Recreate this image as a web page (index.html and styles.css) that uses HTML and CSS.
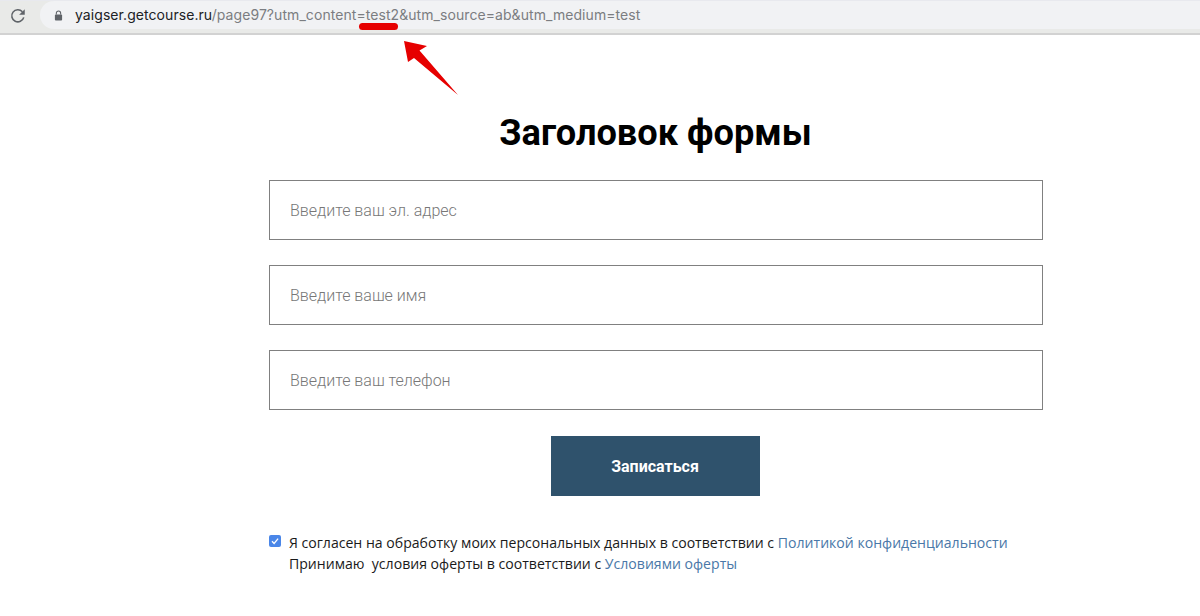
FILE: index.html
```html
<!DOCTYPE html>
<html lang="ru">
<head>
<meta charset="utf-8">
<title>Заголовок формы</title>
<link rel="stylesheet" href="styles.css">
</head>
<body>
<header class="toolbar">
  <svg class="reload" width="18" height="18" viewBox="0 0 16 16"><path d="M13.1 9.2A5.4 5.4 0 1 1 11.9 4.2" fill="none" stroke="#5f6368" stroke-width="1.4"/><path d="M14 1.9V6.9H9z" fill="#5f6368"/></svg>
  <div class="omnibox">
    <svg class="lock" width="9" height="11" viewBox="0 0 10 12"><path d="M2.6 5V3.4a2.4 2.4 0 0 1 4.8 0V5" fill="none" stroke="#5f6368" stroke-width="1.2"/><rect x="1" y="5" width="8" height="6.5" rx="1" fill="#5f6368"/></svg>
    <span class="url"><span class="host">yaigser.getcourse.ru</span>/page97?utm_content=test2&amp;utm_source=ab&amp;utm_medium=test</span>
  </div>
</header>
<svg class="annotation" width="1200" height="100" viewBox="0 0 1200 100"><rect x="359" y="23" width="39" height="7" rx="3.5" fill="#e60000"/><path d="M404 41 427 46 419.5 50.5 458 95 414 58 408 62z" fill="#e60000"/></svg>
<main class="page">
  <h1 class="title">Заголовок формы</h1>
  <form class="form">
    <div class="field">Введите ваш эл. адрес</div>
    <div class="field">Введите ваше имя</div>
    <div class="field">Введите ваш телефон</div>
    <button class="submit" type="button">Записаться</button>
    <div class="consent">
      <span class="check"><svg width="12" height="12" viewBox="0 0 12 12"><path d="M3 6.2 5.1 8.4 9.1 3.6" fill="none" stroke="#fff" stroke-width="1.3"/></svg></span>
      <p class="consent-text">Я согласен на обработку моих персональных данных в соответствии с <a class="link">Политикой конфиденциальности</a><br>Принимаю&nbsp; условия оферты в соответствии с <a class="link">Условиями оферты</a></p>
    </div>
  </form>
</main>
</body>
</html>
```
FILE: styles.css
```css
* { box-sizing: border-box; }
html, body { margin: 0; height: 100%; background: #fff; overflow: hidden; }
.toolbar {
  height: 35px;
  background: #e9eae8;
  border-top: 1px solid #e8e9ee;
  border-bottom: 2px solid #d2d2d2;
  display: flex;
  align-items: flex-start;
  padding-left: 9px;
}
.reload { margin-top: 6px; flex: none; }
.omnibox {
  margin-left: 13px;
  flex: 1;
  height: 28px;
  border-radius: 14px 0 0 14px;
  background: #f1f2f4;
  display: flex;
  align-items: center;
  padding-left: 14px;
}
.lock { flex: none; }
.url {
  margin-left: 12px;
  font: 14px/16px Inter, "Liberation Sans", sans-serif;
  letter-spacing: .065px;
  color: #7b7d81;
  white-space: nowrap;
}
.host { color: #202124; }
.annotation { position: absolute; left: 0; top: 0; pointer-events: none; }
.page { width: 774px; margin-left: 269px; }
.title {
  margin: 0;
  padding: 75px 1px 0 0;
  height: 145px;
  text-align: center;
  font: 700 36.2px/46px Roboto, sans-serif;
  color: #000;
}
.form { display: flex; flex-direction: column; }
.field {
  height: 60px;
  margin-bottom: 25px;
  border: 1px solid #808080;
  padding: 0 20px;
  font: 300 16px/60px Roboto, sans-serif;
  color: #777;
}
.submit {
  align-self: center;
  width: 209px;
  height: 60px;
  border: 0;
  background: #2f526c;
  color: #fff;
  font: 700 16px/60px Roboto, sans-serif;
  margin: 1px 2px 0 0;
}
.consent { display: flex; margin-top: 36px; }
.check {
  flex: none;
  width: 12px;
  height: 12px;
  margin-top: 3px;
  border-radius: 2px;
  background: #4a86e8;
  display: flex;
}
.consent-text {
  margin: 0 0 0 8px;
  font: 14.08px/21px "Open Sans", sans-serif;
  color: #1a1a1a;
}
.link { color: #4a78a8; }
```
